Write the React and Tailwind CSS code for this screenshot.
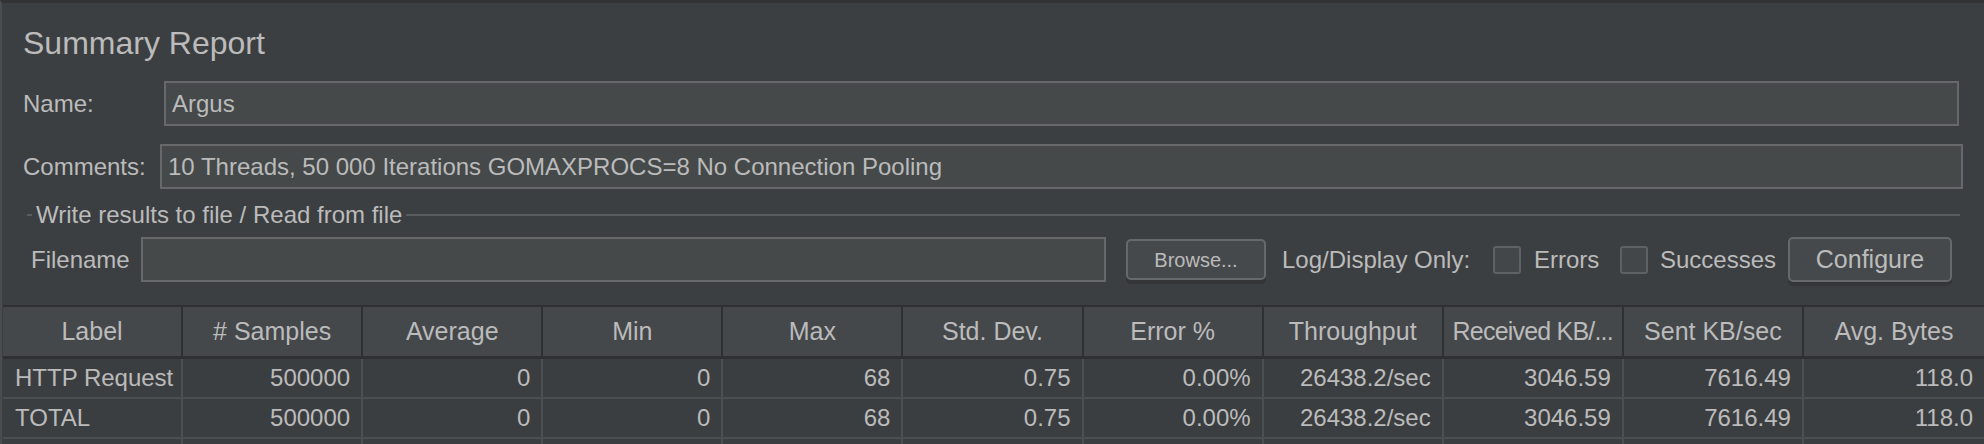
import React from "react";

const columns = [
  "Label",
  "# Samples",
  "Average",
  "Min",
  "Max",
  "Std. Dev.",
  "Error %",
  "Throughput",
  "Received KB/...",
  "Sent KB/sec",
  "Avg. Bytes",
];

const rows = [
  ["HTTP Request", "500000", "0", "0", "68", "0.75", "0.00%", "26438.2/sec", "3046.59", "7616.49", "118.0"],
  ["TOTAL", "500000", "0", "0", "68", "0.75", "0.00%", "26438.2/sec", "3046.59", "7616.49", "118.0"],
  ["", "", "", "", "", "", "", "", "", "", ""],
];

const font = { fontFamily: '"Liberation Sans", Arial, sans-serif' };

const TextField = ({ value, className = "" }) => (
  <div
    className={`h-[45px] flex items-center border-2 border-[#666869] bg-[#45494a] pl-[6px] text-[24px] leading-none text-[#bbbbbb] whitespace-nowrap ${className}`}
  >
    {value}
  </div>
);

const Checkbox = () => (
  <div className="w-[28px] h-[28px] shrink-0 rounded-[3px] border-2 border-[#5f6264] bg-[#43474a]" />
);

const Button = ({ text, className = "" }) => (
  <div
    className={`shrink-0 flex items-center justify-center rounded-[5px] border-2 border-[#66696b] bg-[#45494b] text-[#bbbbbb] leading-none shadow-[0_4px_0_#333537] ${className}`}
  >
    {text}
  </div>
);

export default function App() {
  return (
    <div
      style={font}
      className="w-[1984px] h-[444px] overflow-hidden bg-[#3c3f41] border-t-[3px] border-l-[2px] border-t-[#313335] border-l-[#4a4d4f] text-[#bbbbbb]"
    >
      {/* title */}
      <div className="mt-[24px] ml-[21px] h-[32px] text-[32px] leading-none">Summary Report</div>

      {/* name */}
      <div className="mt-[22px] flex items-center">
        <div className="ml-[21px] w-[141px] text-[24px] leading-none">Name:</div>
        <TextField value="Argus" className="flex-1 mr-[25px]" />
      </div>

      {/* comments */}
      <div className="mt-[18px] flex items-center">
        <div className="ml-[21px] w-[137px] text-[24px] leading-none whitespace-nowrap">Comments:</div>
        <TextField
          value="10 Threads, 50 000 Iterations GOMAXPROCS=8 No Connection Pooling"
          className="flex-1 mr-[21px]"
        />
      </div>

      {/* titled border */}
      <div className="mt-[14px] h-[23px] flex items-center mr-[24px]">
        <div className="ml-[25px] w-[5px] h-[2px] bg-[#595c5e]" />
        <div className="px-[4px] text-[24px] leading-none whitespace-nowrap">
          Write results to file / Read from file
        </div>
        <div className="flex-1 h-[2px] bg-[#595c5e]" />
      </div>

      {/* filename row */}
      <div className="mt-[11px] h-[45px] flex items-center">
        <div className="ml-[29px] w-[110px] text-[24px] leading-none">Filename</div>
        <TextField value="" className="flex-1" />
        <Button text="Browse..." className="ml-[20px] w-[140px] h-[41px] text-[20px]" />
        <div className="ml-[16px] w-[190px] text-[24px] leading-none whitespace-nowrap">Log/Display Only:</div>
        <div className="ml-[21px]">
          <Checkbox />
        </div>
        <div className="ml-[13px] w-[62px] text-[24px] leading-none">Errors</div>
        <div className="ml-[24px]">
          <Checkbox />
        </div>
        <div className="ml-[12px] w-[113px] text-[24px] leading-none whitespace-nowrap">Successes</div>
        <Button text="Configure" className="ml-[15px] mr-[32px] w-[164px] h-[45px] text-[25px]" />
      </div>

      {/* table */}
      <div className="mt-[23px] ml-px">
        <div className="grid grid-cols-11 border-t-[2px] border-b-[3px] border-[#2e3032] bg-[#45484b]">
          {columns.map((c, i) => (
            <div
              key={i}
              className={`h-[49px] flex items-center justify-center text-[25px] leading-none whitespace-nowrap overflow-hidden ${
                i === 8 ? "tracking-[-0.8px]" : ""
              } ${i < columns.length - 1 ? "border-r-2 border-[#2e3032]" : ""}`}
            >
              {c}
            </div>
          ))}
        </div>
        {rows.map((r, ri) => (
          <div key={ri} className="grid grid-cols-11 border-b-2 border-[#4c4f51] bg-[#3b3e40]">
            {r.map((v, i) => (
              <div
                key={i}
                className={`h-[38px] flex items-center text-[24px] leading-none whitespace-nowrap ${
                  i === 0 ? "justify-start pl-[12px]" : "justify-end pr-[11px]"
                } ${i < r.length - 1 ? "border-r-2 border-[#4c4f51]" : ""}`}
              >
                {v}
              </div>
            ))}
          </div>
        ))}
      </div>
    </div>
  );
}
